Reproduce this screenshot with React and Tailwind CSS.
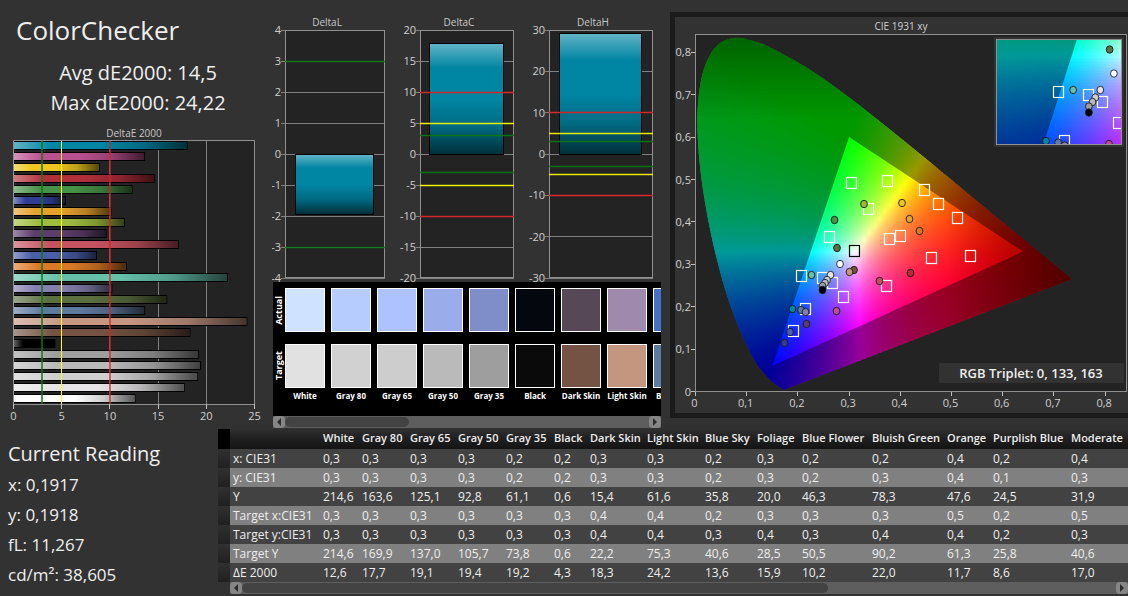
import React from "react";

// one entry per patch, drawn top to bottom
const deltaE = [
  { value: 18, color: "#0085a3" },
  { value: 13.6, color: "#b95090" },
  { value: 8.9, color: "#edc71f" },
  { value: 14.6, color: "#b02f3a" },
  { value: 12.3, color: "#489148" },
  { value: 5.4, color: "#313d95" },
  { value: 10.1, color: "#e6a12d" },
  { value: 11.5, color: "#9fbc40" },
  { value: 9.6, color: "#5d3d6c" },
  { value: 17.1, color: "#c45260" },
  { value: 8.6, color: "#4a5ea8" },
  { value: 11.7, color: "#da7a28" },
  { value: 22.2, color: "#65bfa9" },
  { value: 10.2, color: "#847fb0" },
  { value: 15.9, color: "#5b6f40" },
  { value: 13.6, color: "#5f7a9f" },
  { value: 24.2, color: "#c59682" },
  { value: 18.3, color: "#745344" },
  { value: 4.3, color: "#000000" },
  { value: 19.2, color: "#9e9e9e" },
  { value: 19.4, color: "#bababa" },
  { value: 19.1, color: "#cfcfcf" },
  { value: 17.7, color: "#e6e4e6" },
  { value: 12.6, color: "#ffffff" },
];

const GREEN = "#0a7a12";
const YELLOW = "#ffff00";
const RED = "#e02020";

const limits = [
  { at: 3, color: GREEN },
  { at: 5, color: YELLOW },
  { at: 10, color: RED },
];

const DeltaEChart = () => {
  const x = (v) => 13.5 + v * 9.64;
  return (
    <svg viewBox="0 124 272 302" className="block w-full">
      <defs>
        <linearGradient id="shadeX">
          <stop offset="0" stopColor="#fff" stopOpacity="0.38" />
          <stop offset="0.22" stopColor="#fff" stopOpacity="0" />
          <stop offset="0.5" stopColor="#000" stopOpacity="0" />
          <stop offset="0.75" stopColor="#000" stopOpacity="0.2" />
          <stop offset="1" stopColor="#000" stopOpacity="0.65" />
        </linearGradient>
      </defs>
      <text x="134" y="137" textAnchor="middle" fontSize="10" fill="#c8c8c8">
        DeltaE 2000
      </text>
      <rect x="13.5" y="140.5" width="241" height="264" fill="#232323" />
      {[5, 10, 15, 20].map((v) => (
        <path key={v} d={`M${Math.floor(x(v)) + 0.5} 141V404`} stroke="#808080" />
      ))}
      {deltaE.map((bar, i) => (
        <g key={i}>
          <rect x="14" y={141 + i * 11} width={x(bar.value) - 13.5} height="9" fill="#000" />
          <rect x="14" y={142 + i * 11} width={x(bar.value) - 14.5} height="7" fill={bar.color} />
          <rect x="14" y={142 + i * 11} width={x(bar.value) - 14.5} height="7" fill="url(#shadeX)" />
        </g>
      ))}
      <path d="M13.5 409V140.5H254.5V404.5H13.5" fill="none" stroke="#909090" />
      <path d="M42 141V404" stroke={GREEN} strokeWidth="2" opacity="0.75" />
      <path d="M61.5 141V404" stroke={YELLOW} />
      <path d="M110 141V404" stroke={RED} strokeWidth="2" opacity="0.65" />
      {[0, 5, 10, 15, 20, 25].map((v) => (
        <g key={v}>
          <path d={`M${Math.floor(x(v)) + 0.5} 404V409`} stroke="#c0c0c0" />
          <text x={x(v)} y="420" textAnchor="middle" fontSize="11" fill="#d0d0d0">
            {v}
          </text>
        </g>
      ))}
    </svg>
  );
};

const deltaCharts = [
  { title: "DeltaL", left: 285, right: 385, max: 4, step: 1, value: -1.95, limits: [limits[0]], bar: [295, 374] },
  { title: "DeltaC", left: 420, right: 514, max: 20, step: 5, value: 17.9, limits, bar: [429, 504] },
  { title: "DeltaH", left: 549, right: 653, max: 30, step: 10, value: 29.3, limits, bar: [559, 642] },
];

const DeltaBar = ({ title, left, right, max, step, value, limits, bar }) => {
  const y = (v) => 154 - (v * 124) / max;
  const ticks = [];
  for (let v = max; v >= -max; v -= step) ticks.push(v);
  const top = Math.round(Math.min(y(0), y(value)));
  const height = Math.round(Math.abs(y(0) - y(value)));

  return (
    <g>
      <text x={(left + right) / 2 - 8} y="26" textAnchor="middle" fontSize="10" fill="#c8c8c8">
        {title}
      </text>
      <rect x={left} y="30" width={right - left} height="248" fill="#232323" />
      {ticks.map((v) => (
        <g key={v}>
          <path d={`M${left - 4} ${Math.floor(y(v)) + 0.5}H${right}`} stroke="#808080" />
          <text x={left - 4} y={y(v) + 4} textAnchor="end" fontSize="11" fill="#d0d0d0">
            {v}
          </text>
        </g>
      ))}
      <rect x={left + 0.5} y="30.5" width={right - left - 1} height="247" fill="none" stroke="#909090" />
      <rect x={bar[0]} y={top} width={bar[1] - bar[0]} height={height + 1} fill="#000" />
      <rect x={bar[0] + 1} y={top + 1} width={bar[1] - bar[0] - 2} height={height - 1} fill="#0085a3" />
      <rect x={bar[0] + 1} y={top + 1} width={bar[1] - bar[0] - 2} height={height - 1} fill="url(#shadeY)" />
      {limits.map((l) =>
        [l.at, -l.at].map((v) => (
          <path
            key={v}
            d={`M${left} ${Math.floor(y(v)) + 0.5}H${right}`}
            stroke={l.color}
            strokeWidth="1.4"
            opacity="0.9"
          />
        ))
      )}
    </g>
  );
};

const DeltaCharts = () => (
  <svg viewBox="272 12 398 270" className="block w-full">
    <defs>
      <linearGradient id="shadeY" x1="0" y1="0" x2="0" y2="1">
        <stop offset="0" stopColor="#fff" stopOpacity="0.38" />
        <stop offset="0.22" stopColor="#fff" stopOpacity="0" />
        <stop offset="0.5" stopColor="#000" stopOpacity="0" />
        <stop offset="0.75" stopColor="#000" stopOpacity="0.2" />
        <stop offset="1" stopColor="#000" stopOpacity="0.65" />
      </linearGradient>
    </defs>
    {deltaCharts.map((c) => (
      <DeltaBar key={c.title} {...c} />
    ))}
  </svg>
);

const swatches = [
  { name: "White", actual: "#cfe2ff", target: "#e1e1e1" },
  { name: "Gray 80", actual: "#b6ccff", target: "#d1d1d1" },
  { name: "Gray 65", actual: "#adc2ff", target: "#cdcdcd" },
  { name: "Gray 50", actual: "#9aace9", target: "#bababa" },
  { name: "Gray 35", actual: "#7f8ec8", target: "#9e9e9e" },
  { name: "Black", actual: "#05070f", target: "#0a0a0a" },
  { name: "Dark Skin", actual: "#574858", target: "#745344" },
  { name: "Light Skin", actual: "#9f8aae", target: "#c49680" },
  { name: "Blue Sky", actual: "#4670c4", target: "#5d7b9f" },
];

const ScrollBar = ({ thumb, label }) => (
  <div className="flex h-3 items-center bg-[#5e5e5e]">
    <button aria-label={`${label} left`} className="flex h-3 w-3 shrink-0 items-center justify-center rounded-sm bg-[#868686]">
      <svg viewBox="0 0 6 8" className="h-2 w-1.5">
        <path d="M5 0V8L1 4Z" fill="#2c2c2c" />
      </svg>
    </button>
    <div className="h-full flex-1 border-y border-[#5e5e5e]">
      <div className={`h-full rounded-md bg-[#434343] ${thumb}`} />
    </div>
    <button aria-label={`${label} right`} className="flex h-3 w-3 shrink-0 items-center justify-center rounded-sm bg-[#868686]">
      <svg viewBox="0 0 6 8" className="h-2 w-1.5">
        <path d="M1 0V8L5 4Z" fill="#2c2c2c" />
      </svg>
    </button>
  </div>
);

const SideLabel = ({ children }) => (
  <div className="flex h-11 w-3 shrink-0 items-center justify-center">
    <span className="rotate-180 text-[9px] leading-3 font-bold [writing-mode:vertical-rl]">{children}</span>
  </div>
);

const SwatchStrip = () => (
  <div className="mr-[9px] ml-px">
    <div className="h-[134px] overflow-hidden bg-black pt-1.5 text-white">
      <div className="flex">
        <SideLabel>Actual</SideLabel>
        <div className="flex">
          {swatches.map((s) => (
            <div key={s.name} className="w-[46px] shrink-0">
              <div className="h-11 w-10 border border-white" style={{ backgroundColor: s.actual }} />
            </div>
          ))}
        </div>
      </div>
      <div className="mt-3 flex">
        <SideLabel>Target</SideLabel>
        <div className="flex">
          {swatches.map((s) => (
            <div key={s.name} className="w-[46px] shrink-0">
              <div className="h-11 w-10 border border-white" style={{ backgroundColor: s.target }} />
              <span className="mt-0.5 flex w-10 justify-center text-[8px] leading-3 font-bold whitespace-nowrap">
                {s.name}
              </span>
            </div>
          ))}
        </div>
      </div>
    </div>
    <ScrollBar thumb="w-[34%]" label="Scroll swatches" />
  </div>
);

// CIE 1931 spectral locus
const locus = [
  [0.1741, 0.005], [0.1714, 0.0051], [0.1689, 0.0069], [0.1644, 0.0109], [0.1566, 0.0177],
  [0.144, 0.0297], [0.1241, 0.0578], [0.1096, 0.0868], [0.0913, 0.1327], [0.0687, 0.2007],
  [0.0454, 0.295], [0.0235, 0.4127], [0.0082, 0.5384], [0.0039, 0.6548], [0.0139, 0.7502],
  [0.0389, 0.812], [0.0743, 0.8338], [0.1142, 0.8262], [0.1547, 0.8059], [0.2296, 0.7543],
  [0.3016, 0.6923], [0.3731, 0.6245], [0.4441, 0.5547], [0.5125, 0.4866], [0.5752, 0.4242],
  [0.627, 0.3725], [0.6658, 0.334], [0.6915, 0.3083], [0.719, 0.2809], [0.7347, 0.2653],
];

const px = (x) => 695.5 + x * 512;
const py = (y) => 391.5 - y * 424;

// Catmull-Rom through the locus points
const locusPath = (() => {
  const p = locus.map(([x, y]) => [px(x), py(y)]);
  let d = `M${p[0].join(" ")}`;
  for (let i = 0; i < p.length - 1; i++) {
    const a = p[Math.max(i - 1, 0)];
    const b = p[i];
    const c = p[i + 1];
    const e = p[Math.min(i + 2, p.length - 1)];
    const c1 = [b[0] + (c[0] - a[0]) / 6, b[1] + (c[1] - a[1]) / 6];
    const c2 = [c[0] - (e[0] - b[0]) / 6, c[1] - (e[1] - b[1]) / 6];
    d += `C${c1.join(" ")} ${c2.join(" ")} ${c.join(" ")}`;
  }
  return d + "Z";
})();

const trianglePath = `M${px(0.64)} ${py(0.33)}L${px(0.3)} ${py(0.6)}L${px(0.15)} ${py(0.06)}Z`;

const xyColor = (x, y) => {
  const X = x / y;
  const Z = (1 - x - y) / y;
  const lin = [
    3.2406 * X - 1.5372 - 0.4986 * Z,
    -0.9689 * X + 1.8758 + 0.0415 * Z,
    0.0557 * X - 0.204 + 1.057 * Z,
  ].map((v) => Math.max(v, 0));
  const top = Math.max(...lin);
  let dim = 1;
  if (x > 0.49) dim -= (x - 0.49) * 2;
  if (y > 0.64) dim -= (y - 0.64) * 1.8;
  const rgb = lin.map((v) => Math.round(255 * dim * Math.pow(v / top, 1.05)));
  return `rgb(${rgb.join(",")})`;
};

const ROW = 2;
const STEPS = 74;
const rows = [];
for (let y = 36; y < 392; y += ROW) {
  const cy = Math.max((391.5 - y - ROW / 2) / 424, 0.002);
  const stops = [];
  for (let i = 0; i <= STEPS; i++) stops.push(xyColor((i * 0.74) / STEPS, cy));
  rows.push({ y, stops });
}

const squares = [
  [851, 183], [887, 181], [868, 209], [924, 190], [938, 204], [957, 218], [900, 236],
  [931, 258], [970, 256], [829, 237], [889, 239], [801, 276], [822, 278],
  [832, 283], [843, 297], [886, 286], [805, 309], [793, 331],
];

const dots = [
  [864, 204, "#9fb83f"], [902, 203, "#edc71f"], [909.5, 219, "#e6a12d"], [919.5, 231, "#d97a28"],
  [910.5, 273, "#b02f3a"], [834.5, 220, "#489148"], [837, 248, "#5b6f40"], [840, 264, "#ffffff"],
  [854, 270, "#745140"], [849.5, 272, "#c49680"], [879.5, 281, "#c25060"], [811.5, 275, "#65bfa9"],
  [830.5, 275, "#e6e4e6"], [827, 280, "#cfcfcf"], [825, 283, "#bababa"], [822.5, 286, "#9e9e9e"],
  [822.5, 290, "#000000"], [792.5, 309, "#0085a3"], [801, 310, "#5f7a9f"], [805.5, 312, "#847fb0"],
  [836.5, 311, "#b95090"], [806.5, 324, "#5d3d6c"], [790, 332, "#4a5ea8"], [784.5, 343, "#313d95"],
];

const Markers = ({ mx = (v) => v, my = (v) => v }) => (
  <g>
    {squares.map(([x, y], i) => (
      <rect
        key={i}
        x={Math.round(mx(x)) - 4.5}
        y={Math.round(my(y)) - 5.5}
        width="10"
        height="11"
        fill="none"
        stroke="#fff"
        strokeWidth="1.2"
      />
    ))}
    {dots.map(([x, y, color], i) => (
      <ellipse key={i} cx={mx(x)} cy={my(y)} rx="3.4" ry="3.7" fill={color} stroke="#151515" strokeOpacity="0.85" />
    ))}
  </g>
);

const tickLabel = (v) => (v === 0 ? "0" : `0,${v}`);

const CieChart = () => (
  <svg viewBox="675 17 453 396" className="block w-full">
    <defs>
      {rows.map((r) => (
        <linearGradient key={r.y} id={`row${r.y}`}>
          {r.stops.map((c, i) => (
            <stop key={i} offset={i / STEPS} stopColor={c} />
          ))}
        </linearGradient>
      ))}
      <clipPath id="locusClip">
        <path d={locusPath} />
      </clipPath>
      <clipPath id="insetClip">
        <rect x="997" y="40" width="124" height="104" />
      </clipPath>
      <g id="gamut">
        <g clipPath="url(#locusClip)">
          {rows.map((r) => (
            <rect key={r.y} x={px(0)} y={r.y} width={0.74 * 512} height={ROW + 0.6} fill={`url(#row${r.y})`} />
          ))}
        </g>
        <path d={locusPath + trianglePath} fillRule="evenodd" fillOpacity="0.4" />
      </g>
    </defs>

    <text x="901" y="30" textAnchor="middle" fontSize="10" fill="#d0d0d0">
      CIE 1931 xy
    </text>
    <rect x="695.5" y="34.5" width="431" height="357" fill="#232323" stroke="#909090" />
    <use href="#gamut" />
    <Markers />
    <rect x="849.5" y="245.5" width="10" height="11" fill="none" stroke="#000" strokeWidth="1.2" />

    {[0, 1, 2, 3, 4, 5, 6, 7, 8].map((v) => (
      <g key={v} fontSize="11" fill="#d0d0d0">
        <path d={`M${Math.floor(px(v / 10)) + 0.5} 392V396`} stroke="#c0c0c0" />
        <path d={`M691 ${Math.floor(py(v / 10)) + 0.5}H695`} stroke="#c0c0c0" />
        <text x={px(v / 10) - 1} y="407" textAnchor="middle">
          {tickLabel(v)}
        </text>
        <text x="691" y={py(v / 10) + 4} textAnchor="end">
          {tickLabel(v)}
        </text>
      </g>
    ))}

    {/* magnified blue corner */}
    <rect x="994" y="37" width="130" height="110" fill="#323232" />
    <g clipPath="url(#insetClip)">
      <use href="#gamut" transform="matrix(1.43 0 0 1.5 -87.3 -322.5)" />
      <Markers mx={(v) => 1046 + (v - 792.5) * 1.43} my={(v) => 141 + (v - 309) * 1.5} />
    </g>
    <rect x="996.5" y="39.5" width="125" height="105" fill="none" stroke="#909090" />

    <rect x="939" y="363" width="185" height="20" fill="#323232" />
    <text x="1031" y="378" textAnchor="middle" fontSize="13" fontWeight="600" fill="#eee">
      RGB Triplet: 0, 133, 163
    </text>
  </svg>
);

const columns = [
  { name: "White", width: "w-[39px]" },
  { name: "Gray 80", width: "w-12" },
  { name: "Gray 65", width: "w-12" },
  { name: "Gray 50", width: "w-12" },
  { name: "Gray 35", width: "w-12" },
  { name: "Black", width: "w-9" },
  { name: "Dark Skin", width: "w-[57px]" },
  { name: "Light Skin", width: "w-[58px]" },
  { name: "Blue Sky", width: "w-[52px]" },
  { name: "Foliage", width: "w-[45px]" },
  { name: "Blue Flower", width: "w-[70px]" },
  { name: "Bluish Green", width: "w-[75px]" },
  { name: "Orange", width: "w-[46px]" },
  { name: "Purplish Blue", width: "w-[78px]" },
  { name: "Moderate", width: "" },
];

const measurements = [
  ["x: CIE31", "0,3", "0,3", "0,3", "0,3", "0,2", "0,2", "0,3", "0,3", "0,2", "0,3", "0,2", "0,2", "0,4", "0,2", "0,4"],
  ["y: CIE31", "0,3", "0,3", "0,3", "0,3", "0,2", "0,2", "0,3", "0,3", "0,2", "0,3", "0,2", "0,3", "0,4", "0,1", "0,3"],
  ["Y", "214,6", "163,6", "125,1", "92,8", "61,1", "0,6", "15,4", "61,6", "35,8", "20,0", "46,3", "78,3", "47,6", "24,5", "31,9"],
  ["Target x:CIE31", "0,3", "0,3", "0,3", "0,3", "0,3", "0,3", "0,4", "0,4", "0,2", "0,3", "0,3", "0,3", "0,5", "0,2", "0,5"],
  ["Target y:CIE31", "0,3", "0,3", "0,3", "0,3", "0,3", "0,3", "0,4", "0,4", "0,3", "0,4", "0,3", "0,4", "0,4", "0,2", "0,3"],
  ["Target Y", "214,6", "169,9", "137,0", "105,7", "73,8", "0,6", "22,2", "75,3", "40,6", "28,5", "50,5", "90,2", "61,3", "25,8", "40,6"],
  ["ΔE 2000", "12,6", "17,7", "19,1", "19,4", "19,2", "4,3", "18,3", "24,2", "13,6", "15,9", "10,2", "22,0", "11,7", "8,6", "17,0"],
];

const DataTable = () => (
  <div className="min-w-0 flex-1">
    <div className="overflow-hidden">
      <table className="w-full min-w-[910px] table-fixed text-left text-[12px] leading-[19px] font-medium whitespace-nowrap">
        <thead>
          <tr className="h-5 bg-linear-to-b from-[#303030] via-[#1f1f1f] to-[#141414] text-[11px] leading-[18px]">
            <td className="w-3 bg-black" />
            <td className="w-[90px]" />
            {columns.map((c) => (
              <th key={c.name} className={`pb-0.5 pl-[3px] font-semibold ${c.width}`}>
                {c.name}
              </th>
            ))}
          </tr>
        </thead>
        <tbody>
          {measurements.map(([label, ...cells]) => (
            <tr key={label} className="h-[19px] bg-[#424242] even:bg-[#808080]">
              <td className="bg-linear-to-b from-[#303030] to-[#202020]" />
              <th className="pl-[3px] font-medium">{label}</th>
              {cells.map((cell, i) => (
                <td key={i} className="pl-[3px]">
                  {cell}
                </td>
              ))}
            </tr>
          ))}
        </tbody>
      </table>
    </div>
    <div className="ml-3">
      <ScrollBar thumb="w-[67%]" label="Scroll table" />
    </div>
  </div>
);

const App = () => {
  return (
    <div className="min-h-screen bg-[#323232] font-['Open_Sans','Noto_Sans',sans-serif] text-[#eeeeee]">
      <div className="grid grid-cols-[minmax(0,272fr)_minmax(0,398fr)_minmax(0,458fr)] items-start">
        <section>
          <h1 className="pt-3 pl-4 text-[26px] leading-9 font-medium">ColorChecker</h1>
          <div className="pt-2.5 pb-1.5 pl-1 text-center text-[20px] leading-[30px] font-medium">
            <p>Avg dE2000: 14,5</p>
            <p>Max dE2000: 24,22</p>
          </div>
          <DeltaEChart />
        </section>
        <section className="pt-3">
          <DeltaCharts />
          <SwatchStrip />
        </section>
        <section className="pt-3">
          <div className="border-y-[5px] border-l-[5px] border-[#1b1b1b]">
            <CieChart />
          </div>
        </section>
      </div>
      <div className="flex pt-px">
        <section className="w-[218px] shrink-0 pt-[9px] pl-2">
          <h2 className="text-[20px] leading-8 font-medium">Current Reading</h2>
          <div className="text-[17px] leading-[30px]">
            <p>x: 0,1917</p>
            <p>y: 0,1918</p>
            <p>fL: 11,267</p>
            <p>cd/m²: 38,605</p>
          </div>
        </section>
        <DataTable />
      </div>
    </div>
  );
};

export default App;
